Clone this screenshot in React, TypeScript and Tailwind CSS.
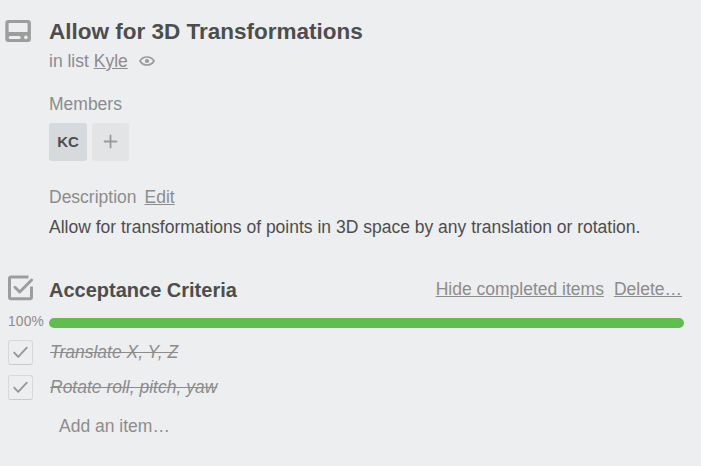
import type { ReactNode } from "react";

function Row({ icon, className, children }: { icon?: ReactNode; className: string; children: ReactNode }) {
  return (
    <div className={`flex ${className}`}>
      <div className="w-[49px] shrink-0">{icon}</div>
      {children}
    </div>
  );
}

function CardIcon() {
  return (
    <svg className="ml-[5px] mt-1 block" width="26" height="22" viewBox="0 0 26 22" fill="none">
      <rect x="0.300" y="0" width="25.600" height="22" rx="3" fill="#9c9e9e" />
      <rect x="3.600" y="3" width="19" height="9" rx="0.800" fill="#edeef0" />
      <path d="M5.200 17.400h9" stroke="#edeef0" strokeWidth="3" strokeLinecap="round" />
      <circle cx="20.900" cy="17.400" r="1.800" fill="#edeef0" />
    </svg>
  );
}

function EyeIcon() {
  return (
    <svg className="ml-[11px] mt-[9.500px] block" width="16" height="10" viewBox="0 0 16 10" fill="none">
      <path d="M1 5C2.600 2.200 5 1 8 1s5.400 1.200 7 4C13.400 7.800 11 9 8 9S2.600 7.800 1 5z" stroke="#999b9b" strokeWidth="1.700" />
      <circle cx="8" cy="5" r="2.100" fill="#999b9b" />
    </svg>
  );
}

function ChecklistIcon() {
  return (
    <svg className="ml-2 block" width="26" height="26" viewBox="0 0 26 26" fill="none">
      <path
        d="M20.500 2H3A1.400 1.400 0 0 0 1.500 3.500v18.800A1.500 1.500 0 0 0 3 23.800h19a1.500 1.500 0 0 0 1.500-1.500V11.500"
        stroke="#9c9e9e"
        strokeWidth="3"
      />
      <path d="M7 12.300l4.700 4.700L23.600 5" stroke="#9c9e9e" strokeWidth="3" strokeLinecap="round" strokeLinejoin="round" />
    </svg>
  );
}

function Checkbox() {
  return (
    <div className="ml-2 mt-[5px] flex h-[25px] w-[25px] items-center justify-center rounded-[3px] border border-[#d6d8da] border-b-[#c8cacc]">
      <svg className="-mt-px" width="17" height="13" viewBox="0 0 17 13" fill="none">
        <path d="M2.200 6.600l4 4.300L14.800 1.700" stroke="#969898" strokeWidth="1.900" strokeLinecap="round" strokeLinejoin="round" />
      </svg>
    </div>
  );
}

const items = ["Translate X, Y, Z", "Rotate roll, pitch, yaw"];

export default function App() {
  return (
    <main className="h-[466px] w-[701px] overflow-hidden bg-[#edeef0] pt-4 font-['Liberation_Sans',Arial,sans-serif] text-[17.5px] leading-[30px] whitespace-nowrap text-[#8c8c8c]">
      <Row icon={<CardIcon />} className="h-[30px]">
        <h1 className="pt-px text-[22.5px] font-bold text-[#4d4d4d]">Allow for 3D Transformations</h1>
      </Row>
      <Row className="h-[30px]">
        <p>
          in list <a className="underline">Kyle</a>
        </p>
        <EyeIcon />
      </Row>
      <Row className="mt-[13px] h-[30px]">
        <h2>Members</h2>
      </Row>
      <Row className="mt-1 h-[38px]">
        <div className="flex w-[38px] items-center justify-center rounded-[3px] bg-[#d6dadc] text-[15px] font-bold text-[#4d4d4d]">KC</div>
        <button className="ml-[5px] flex w-[37px] items-center justify-center rounded-[3px] bg-[#e2e4e6]">
          <svg className="-mt-px" width="15" height="15" viewBox="0 0 15 15">
            <path d="M7.500 1.500v12M1.500 7.500h12" stroke="#999b9b" strokeWidth="1.800" strokeLinecap="round" />
          </svg>
        </button>
      </Row>
      <Row className="mt-[21px] h-[30px]">
        <h2>Description</h2>
        <a className="ml-2 underline">Edit</a>
      </Row>
      <Row className="h-[30px]">
        <p className="text-[#4d4d4d]">Allow for transformations of points in 3D space by any translation or rotation.</p>
      </Row>
      <Row icon={<ChecklistIcon />} className="mt-[33px] h-[30px]">
        <h2 className="text-[20px] font-bold text-[#4d4d4d]">Acceptance Criteria</h2>
        <div className="mr-[19px] ml-auto flex gap-[10px] leading-[28px]">
          <a className="underline">Hide completed items</a>
          <a className="underline">Delete…</a>
        </div>
      </Row>
      <Row icon={<span className="ml-2 block pt-0.5 text-[13.75px] tracking-[0.2px]">100%</span>} className="h-[30px]">
        <div className="mt-[13px] h-[10px] w-[635px] rounded-full bg-[#61bd4f]" />
      </Row>
      {items.map((item) => (
        <Row key={item} icon={<Checkbox />} className="h-[35px]">
          <p className="pl-px leading-[34px] italic line-through">{item}</p>
        </Row>
      ))}
      <Row className="h-[42px]">
        <p className="pl-[10px] leading-[42px]">Add an item…</p>
      </Row>
    </main>
  );
}
